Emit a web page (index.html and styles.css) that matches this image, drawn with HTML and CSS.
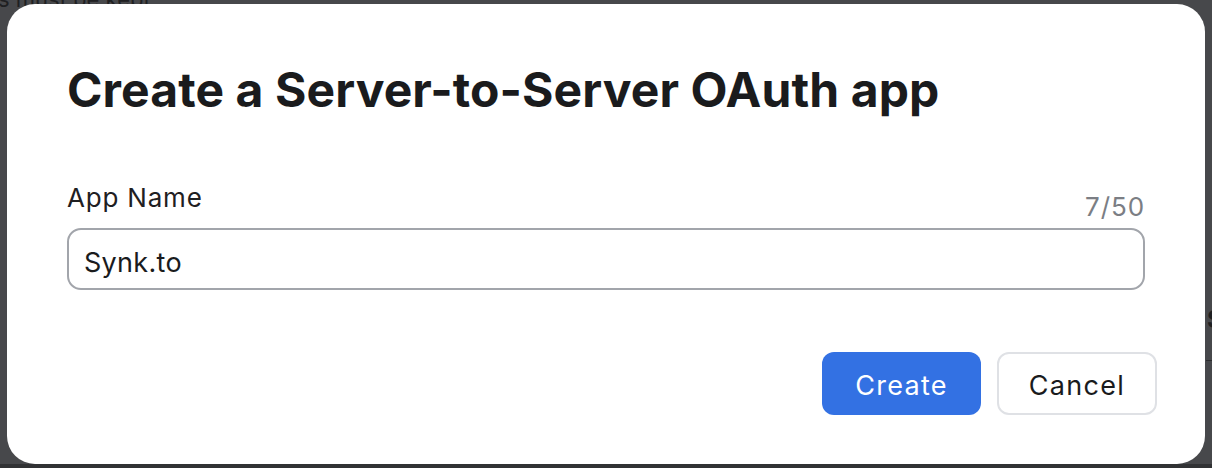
FILE: index.html
```html
<!DOCTYPE html>
<html lang="en">
<head>
  <meta charset="UTF-8">
  <meta name="viewport" content="width=device-width, initial-scale=1.0">
  <title>Create a Server-to-Server OAuth app</title>
  <link rel="stylesheet" href="styles.css">
</head>
<body>
  <div class="backdrop">
    <div class="behind-text">s must be kept</div>
    <div class="behind-side">S</div>
    <div class="behind-rule"></div>
  </div>

  <div class="modal">
    <h2 class="modal-title">Create a Server-to-Server OAuth app</h2>

    <div class="field">
      <div class="field-head">
        <label class="field-label" for="appName">App Name</label>
        <span class="field-count">7/50</span>
      </div>
      <input class="field-input" id="appName" type="text" value="Synk.to" maxlength="50">
    </div>

    <div class="actions">
      <button class="btn btn-primary">Create</button>
      <button class="btn btn-default">Cancel</button>
    </div>
  </div>
</body>
</html>
```

FILE: styles.css
```css
html, body {
  height: 100%;
}
body {
  font-family: Inter, "Noto Sans", Arial, sans-serif;
  margin: 0;
  background-color: #47484b;
  overflow: hidden;
}
.backdrop {
  height: 464px;
  position: relative;
}
.behind-text {
  position: absolute;
  left: -2px;
  top: -14px;
  font-size: 22px;
  color: #1f2022;
}
.behind-side {
  position: absolute;
  left: 1207px;
  top: 305px;
  font-size: 24px;
  font-weight: 700;
  color: #1f2022;
}
.behind-rule {
  position: absolute;
  left: 1206px;
  top: 360px;
  width: 6px;
  height: 1px;
  background: #2c2d2f;
}
body::after {
  content: "";
  display: block;
  height: 4px;
  background: #313234;
}
.modal {
  position: absolute;
  left: 7px;
  top: 4px;
  width: 1198px;
  height: 460px;
  box-sizing: border-box;
  padding: 58px 48px 49px 60px;
  background: #fff;
  border-radius: 28px;
  display: flex;
  flex-direction: column;
}
.modal-title {
  margin: 0;
  font-size: 48px;
  line-height: 56px;
  font-weight: 700;
  color: #1a1b1d;
  letter-spacing: 0.1px;
}
.field {
  margin-top: 65px;
  margin-right: 12px;
}
.field-head {
  display: flex;
  justify-content: space-between;
  align-items: flex-end;
}
.field-label {
  font-size: 26px;
  line-height: 30px;
  letter-spacing: 0.8px;
  color: #1f2022;
  margin-bottom: 9px;
}
.field-count {
  font-size: 26px;
  line-height: 30px;
  letter-spacing: 0.9px;
  color: #7b7e84;
}
.field-input {
  display: block;
  width: 100%;
  box-sizing: border-box;
  height: 62px;
  margin-top: 6px;
  padding: 6px 15px 0;
  border: 2px solid #a2a5ab;
  border-radius: 14px;
  font-family: inherit;
  font-size: 27px;
  letter-spacing: 0.3px;
  color: #1a1b1d;
  outline: none;
}
.actions {
  margin-top: auto;
  display: flex;
  justify-content: flex-end;
  gap: 16px;
}
.btn {
  height: 63px;
  width: 159px;
  padding: 3px 0 0;
  border-radius: 12px;
  font-family: inherit;
  font-size: 27px;
  letter-spacing: 1.3px;
  cursor: pointer;
}
.btn-primary {
  background-color: #3371e3;
  color: #fff;
  border: none;
}
.btn-default {
  width: 160px;
  background-color: #fff;
  color: #1a1b1d;
  border: 2px solid #dfe1e5;
}
```
